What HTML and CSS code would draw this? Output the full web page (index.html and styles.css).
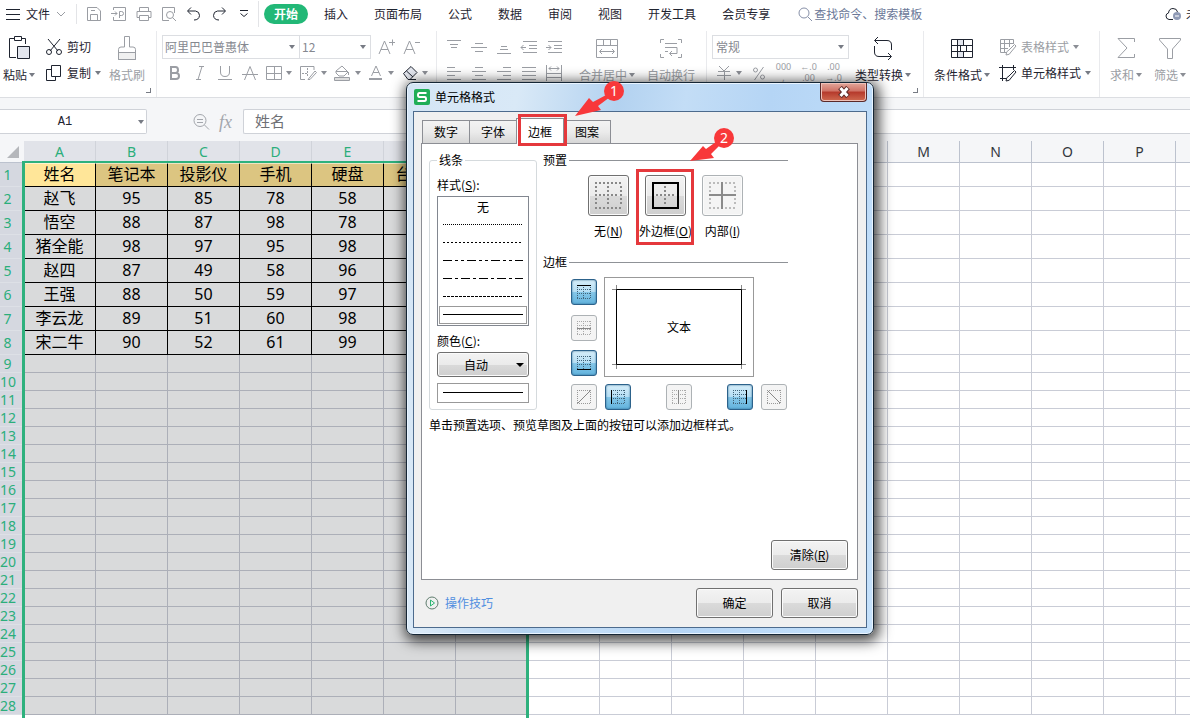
FILE: index.html
```html
<!DOCTYPE html>
<html lang="zh-CN">
<head>
<meta charset="utf-8">
<title>单元格格式</title>
<link rel="stylesheet" href="styles.css">
</head>
<body>
<svg class="defs" aria-hidden="true">
  <symbol id="grid-dots" viewBox="0 0 14 14">
    <path d="M0 .5H14M0 4.5H14M0 8.5H14M0 13.5H14M.5 0V14M6.5 0V14M13.5 0V14" fill="none" stroke="currentColor" stroke-dasharray="1 1"/>
  </symbol>
  <symbol id="big-dots" viewBox="0 0 27 27">
    <path d="M0 1H27M0 26H27M1 4V24M26 4V24" fill="none" stroke="currentColor" stroke-width="2" stroke-dasharray="2 2"/>
  </symbol>
  <symbol id="big-cross" viewBox="0 0 27 27">
    <path d="M4 13H23M13 4V23" fill="none" stroke="currentColor" stroke-width="2" stroke-dasharray="2 2"/>
  </symbol>
</svg>

<nav class="menubar">
  <button class="file-menu"><svg width="14" height="12" viewBox="0 0 14 12"><path d="M0 1.5H14M0 6.500H14M0 11.500H14"/></svg>文件<svg class="dim" width="10" height="6" viewBox="0 0 10 6"><path d="M1 1L5 5L9 1"/></svg></button>
  <div class="quick">
    <button aria-label="保存"><svg class="dim" width="16" height="16" viewBox="0 0 16 16"><path d="M1.500 1.500H11L14.500 5V14.500H1.500ZM4.500 14V8.500H11.500V14M5 4.500H9"/></svg></button>
    <button aria-label="输出为PDF"><svg class="dim" width="16" height="16" viewBox="0 0 16 16"><path d="M2.500 4V1.500H14.500V14.500H2.500V11M0 7.500H6M4 5.500L6 7.500L4 9.500M8.500 12V5.500H10.500Q12.500 5.500 12.500 7.500Q12.500 9.500 10.500 9.500H8"/></svg></button>
    <button aria-label="打印"><svg class="dim" width="16" height="16" viewBox="0 0 16 16"><path d="M3.500 5V1.500H12.500V5M3.500 11.500H1V5.500H15V11.500H12.500M3.500 9.500H12.500V14.500H3.500Z"/></svg></button>
    <button aria-label="打印预览"><svg class="dim" width="16" height="16" viewBox="0 0 16 16"><path d="M8 14.500H1.500V1.500H13.500V7M11.500 11.500L15 15"/><circle cx="9" cy="9" r="3.500"/></svg></button>
    <button aria-label="撤销"><svg width="16" height="16" viewBox="0 0 16 16"><path d="M5 1.500L1.500 5L5 8.500M2 5H9.500Q13.500 5.500 13.500 9.500Q13 14 8 14"/></svg></button>
    <button aria-label="恢复"><svg width="16" height="16" viewBox="0 0 16 16"><path d="M11 1.500L14.500 5L11 8.500M14 5H6.500Q2.500 5.500 2.500 9.500Q3 14 8 14"/></svg></button>
    <button aria-label="自定义快速访问"><svg width="10" height="8" viewBox="0 0 10 8"><path d="M1 .5H9M1.500 3.500L5 6.500L8.500 3.500"/></svg></button>
  </div>
  <div class="tabs-main">
    <button class="active">开始</button><button>插入</button><button>页面布局</button><button>公式</button><button>数据</button><button>审阅</button><button>视图</button><button>开发工具</button><button>会员专享</button>
  </div>
  <label class="search"><svg width="15" height="15" viewBox="0 0 15 15"><circle cx="6" cy="6" r="5"/><path d="M10 10L14 14"/></svg><input type="text" placeholder="查找命令、搜索模板" aria-label="查找命令、搜索模板"></label>
  <button class="account"><svg width="17" height="14" viewBox="0 0 17 14"><path d="M8 12.500H4Q1 12 1 9Q1 6.500 3.500 6Q4 1.500 8 1.500Q12 1.500 12.500 5"/><circle class="badge" cx="12" cy="9" r="4"/><path class="minus" d="M10 9H14"/></svg>未同步</button>
</nav>

<div class="ribbon">
  <section class="group clip">
    <button class="big"><svg width="24" height="26" viewBox="0 0 24 26"><path d="M7 3.500H2.500V22.500H9M15 3.500H18.500V9M7.500 1.500H14.500V5.500H7.500Z"/><path class="tint" d="M10.500 11.500H22.500V23.500H10.500Z"/></svg><span>粘贴<i class="caret"></i></span></button>
    <div class="stack">
      <button class="row"><svg width="18" height="18" viewBox="0 0 18 18"><path d="M3 1L13 13M15 1L5 13"/><circle cx="4" cy="14" r="2.500"/><circle cx="14" cy="14" r="2.500"/></svg>剪切</button>
      <button class="row"><svg width="18" height="18" viewBox="0 0 18 18"><path d="M6.500 1.500H15.500V12.500H6.500ZM6 5.500H1.500V16.500H10.500V13"/></svg>复制<i class="caret"></i></button>
    </div>
    <button class="big off brush"><svg width="20" height="26" viewBox="0 0 20 26"><path class="tint" d="M1.500 17.500H18.500V24.500H1.500Z"/><path d="M7.500 12V1.500H12.500V12H16Q18.500 12 18.500 14.500V24.500H1.500V14.500Q1.500 12 4 12Z"/></svg><span>格式刷</span></button>
    <i class="corner"></i>
  </section>

  <section class="group font">
    <div class="line">
      <span class="combo family"><select aria-label="字体"><option>阿里巴巴普惠体</option></select><i class="caret"></i></span>
      <span class="combo size"><select aria-label="字号"><option>12</option></select><i class="caret"></i></span>
      <button class="ic" aria-label="增大字号"><svg width="18" height="18" viewBox="0 0 18 18"><path d="M1 16L6.500 3L12 16M3 11.500H10M11 4.500H17M14.500 1.500V7.500"/></svg></button>
      <button class="ic" aria-label="减小字号"><svg width="18" height="18" viewBox="0 0 18 18"><path d="M1 16L6.500 3L12 16M3 11.500H10M12 4.500H17"/></svg></button>
    </div>
    <div class="line">
      <button class="ic" aria-label="加粗"><svg width="16" height="16" viewBox="0 0 16 16"><path stroke-width="2" d="M4 2H8.500Q11 2 11 5Q11 8 8.500 8H4ZM4 8H9Q12 8 12 11Q12 14 9 14H4Z"/></svg></button>
      <button class="ic" aria-label="倾斜"><svg width="16" height="16" viewBox="0 0 16 16"><path d="M7 1.500H12M4 14.500H9M10 1.500L6 14.500"/></svg></button>
      <button class="ic" aria-label="下划线"><svg width="16" height="16" viewBox="0 0 16 16"><path d="M3.500 1V7Q3.500 11.500 8 11.500Q12.500 11.500 12.500 7V1M1 14.500H15"/></svg></button>
      <button class="ic" aria-label="删除线"><svg width="16" height="16" viewBox="0 0 16 16"><path d="M2.500 15L8 1.500L13.500 15M0 9.500H16"/></svg></button>
      <button class="ic drop" aria-label="边框"><svg width="16" height="16" viewBox="0 0 16 16"><path d="M.5 1.500H15.500V14.500H.5ZM8.500 1.500V14.500M1 8.500H15"/></svg><i class="caret"></i></button>
      <button class="ic drop" aria-label="绘图边框"><svg width="18" height="16" viewBox="0 0 18 16"><path d="M6 14.500H1.500V1.500H15V5M9 14.500L16 6L17.500 7.500L11 14.500Z"/><path d="M3 8.500H9M8.500 3V11" stroke-dasharray="2 1"/></svg><i class="caret"></i></button>
      <button class="ic drop" aria-label="填充颜色"><svg width="18" height="16" viewBox="0 0 18 16"><path d="M3 6L9 1L15 7L11 11H6L3 8ZM3 6.500H14M15.500 7V10"/><path class="bar" d="M1.500 12.500H16.500V15.500H1.500Z"/></svg><i class="caret"></i></button>
      <button class="ic drop" aria-label="字体颜色"><svg width="16" height="16" viewBox="0 0 16 16"><path d="M3.500 11L8 1L12.500 11M5 7.500H11"/><path d="M1 14H14" stroke-width="2"/></svg><i class="caret"></i></button>
      <button class="ic drop dark" aria-label="清除"><svg width="16" height="16" viewBox="0 0 16 16"><path class="tint" d="M1.500 8.500L9 1.500L15 7.500L8 14.500H6Z"/><path d="M4.500 6L11 12M8 14.500H14"/></svg><i class="caret"></i></button>
    </div>
  </section>

  <section class="group align">
    <div class="stack">
      <div class="line">
        <button class="ic" aria-label="顶端对齐"><svg width="16" height="16" viewBox="0 0 16 16"><path d="M1 1.500H15M4 5.500H12M5 8.500H11"/></svg></button>
        <button class="ic" aria-label="垂直居中"><svg width="16" height="16" viewBox="0 0 16 16"><path d="M4 4.500H12M0 8.500H16M4 12.500H12"/></svg></button>
        <button class="ic" aria-label="底端对齐"><svg width="16" height="16" viewBox="0 0 16 16"><path d="M5 7.500H11M4 10.500H12M1 14.500H15"/></svg></button>
        <button class="ic" aria-label="减少缩进"><svg width="18" height="16" viewBox="0 0 18 16"><path d="M3 2.500H17M9 6.500H17M9 9.500H17M3 13.500H17M1 8.500H6M3.500 6L1 8.500L3.500 11"/></svg></button>
        <button class="ic" aria-label="增加缩进"><svg width="18" height="16" viewBox="0 0 18 16"><path d="M3 2.500H17M9 6.500H17M9 9.500H17M3 13.500H17M1 8.500H6M3.500 6L6 8.500L3.500 11"/></svg></button>
      </div>
      <div class="line">
        <button class="ic" aria-label="左对齐"><svg width="16" height="16" viewBox="0 0 16 16"><path d="M1 2.500H9M1 6.500H15M1 10.500H9M1 14.500H15"/></svg></button>
        <button class="ic" aria-label="居中"><svg width="16" height="16" viewBox="0 0 16 16"><path d="M4 2.500H12M1 6.500H15M4 10.500H12M1 14.500H15"/></svg></button>
        <button class="ic" aria-label="右对齐"><svg width="16" height="16" viewBox="0 0 16 16"><path d="M7 2.500H15M1 6.500H15M7 10.500H15M1 14.500H15"/></svg></button>
        <button class="ic" aria-label="两端对齐"><svg width="16" height="16" viewBox="0 0 16 16"><path d="M1 2.500H15M1 6.500H15M1 10.500H15M1 14.500H15"/></svg></button>
        <button class="ic" aria-label="分散对齐"><svg width="16" height="16" viewBox="0 0 16 16"><path d="M.5 0V16M15.500 0V16M3 3.500H13M5 1.500L3 3.500L5 5.500M11 1.500L13 3.500L11 5.500M1 8.500H15M1 12.500H15"/></svg></button>
      </div>
    </div>
    <button class="big off merge"><svg width="24" height="26" viewBox="0 0 24 26"><path d="M1.500 4.500H22.500V22.500H1.500ZM1.500 10.500H22.500M8.500 4.500V10.500M15.500 4.500V10.500M5 16.500H19M7 14L4.500 16.500L7 19M17 14L19.500 16.500L17 19"/></svg><span>合并居中<i class="caret"></i></span></button>
    <button class="big off"><svg width="24" height="26" viewBox="0 0 24 26"><path d="M1.500 8V4.500H5M19 4.500H22.500V8M22.500 19V22.500H19M5 22.500H1.500V19M6 8.500H18M6 12.500H18V18.500H11M6 16.500H9M13 16L10.500 18.500L13 21"/></svg><span>自动换行</span></button>
  </section>

  <section class="group number">
    <div class="stack">
      <div class="line"><span class="combo format"><select aria-label="数字格式"><option>常规</option></select><i class="caret"></i></span></div>
      <div class="line">
        <button class="ic drop" aria-label="货币"><svg width="16" height="16" viewBox="0 0 16 16"><path d="M3 1L8 6L13 1M8.500 6V15M2 6.500H14M1 10.500H15"/></svg><i class="caret"></i></button>
        <button class="ic" aria-label="百分比"><svg width="14" height="16" viewBox="0 0 14 16"><circle cx="3.500" cy="5" r="2"/><circle cx="10.500" cy="12" r="2"/><path d="M11.500 2L2.500 15"/></svg></button>
        <button class="ic mini" aria-label="千位分隔"><span>000</span><span>,</span></button>
        <button class="ic mini" aria-label="增加小数位"><span>←.0</span><span>.00</span></button>
        <button class="ic mini" aria-label="减少小数位"><span>.00</span><span>→.0</span></button>
      </div>
    </div>
    <button class="big convert"><svg width="24" height="26" viewBox="0 0 24 26"><path d="M7 2L3.500 5.500L7 9M4 5.500H16Q20.500 5.500 20.500 10V15M3.500 11V17Q3.500 21.500 8 21.500H20M17 18L20.500 21.500L17 25"/></svg><span>类型转换<i class="caret"></i></span></button>
    <i class="corner"></i>
  </section>

  <section class="group styles">
    <button class="big"><svg width="24" height="26" viewBox="0 0 24 26"><path class="tint" d="M7.500 4.500H13.500V10.500H7.500ZM7.500 16.500H13.500V22.500H7.500Z"/><path d="M1.500 4.500H22.500V22.500H1.500ZM1.500 10.500H22.500M1.500 16.500H22.500M7.500 4.500V22.500M10.500 10.500V16.500M13.500 4.500V10.500M16.500 16.500V10.500M13.500 16.500V22.500"/></svg><span>条件格式<i class="caret"></i></span></button>
    <div class="stack">
      <button class="row off"><svg width="18" height="18" viewBox="0 0 18 18"><path d="M7 14.500H1.500V1.500H14.500V6M1.500 5.500H14.500M1.500 10.500H9M5.500 1.500V14.500M10.500 1.500V9M7 17Q7 13 10 12L15.500 6.500L17 8L12 14Q11 17 7 17Z"/></svg>表格样式<i class="caret"></i></button>
      <button class="row"><svg width="18" height="18" viewBox="0 0 18 18"><path d="M0 3.500H17M3.500 1V17M14.500 1V6M1 14.500H7M7 17Q7 13 10 12L15.500 6.500L17 8L12 14Q11 17 7 17Z"/></svg>单元格样式<i class="caret"></i></button>
    </div>
  </section>

  <section class="group edit">
    <button class="big off"><svg width="24" height="26" viewBox="0 0 24 26"><path d="M20.500 7V3.500H4L13 13L4 22.500H20.500V19"/></svg><span>求和<i class="caret"></i></span></button>
    <button class="big off"><svg width="24" height="26" viewBox="0 0 24 26"><path d="M1.500 3.500H22.500V5L14.500 14V23.500H9.500V14L1.500 5Z"/></svg><span>筛选<i class="caret"></i></span></button>
  </section>
</div>

<div class="formula">
  <span class="namebox"><input type="text" value="A1" aria-label="名称框"><i class="caret"></i></span>
  <button aria-label="查找"><svg width="18" height="18" viewBox="0 0 18 18"><circle cx="8" cy="7.500" r="6"/><path d="M12.500 12L17 16.500M5 6.500H11M5 9.500H11"/></svg></button>
  <button class="fx" aria-label="插入函数">fx</button>
  <input class="content" type="text" value="姓名" aria-label="编辑栏">
</div>

<main class="sheet">
  <table class="cells" id="cells"><thead></thead><tbody></tbody></table>
  <div class="selection"></div>
</main>

<section class="dialog" role="dialog" aria-labelledby="dlg-title">
  <header class="titlebar">
    <svg width="16" height="16" viewBox="0 0 16 16"><rect width="16" height="16" rx="2" fill="#1fae57"/><path d="M12.500 4H5.500Q4 4 4 6Q4 8 5.500 8H10.500Q12 8 12 10Q12 12 10.500 12H3.500" fill="none" stroke="#fff" stroke-width="2"/></svg>
    <h1 id="dlg-title">单元格格式</h1>
    <button class="close" aria-label="关闭"><svg width="14" height="12" viewBox="0 0 14 12"><path d="M3 1.500L11 10.500M11 1.500L3 10.500" stroke="#5b2a28" stroke-width="5"/><path d="M3.500 2L10.500 10M10.500 2L3.500 10" stroke="#fff" stroke-width="3"/></svg></button>
  </header>
  <div class="client">
    <div class="tabs" role="tablist">
      <button role="tab">数字</button><button role="tab">字体</button><button role="tab" aria-selected="true">边框</button><button role="tab">图案</button>
    </div>
    <div class="page">
      <div class="columns">
        <fieldset class="lines">
          <legend>线条</legend>
          <p class="caption" id="l-style">样式(<u>S</u>):</p>
          <div class="list" role="listbox" aria-labelledby="l-style">
            <button role="option">无</button>
            <button role="option" aria-label="细点线"><svg width="80" height="2"><path d="M0 .5H80" stroke-dasharray="1 1"/></svg></button>
            <button role="option" aria-label="点线"><svg width="80" height="2"><path d="M0 .5H80" stroke-dasharray="2 2"/></svg></button>
            <button role="option" aria-label="双点划线"><svg width="80" height="2"><path d="M0 .5H80" stroke-dasharray="9 3 3 3 3 3"/></svg></button>
            <button role="option" aria-label="点划线"><svg width="80" height="2"><path d="M0 .5H80" stroke-dasharray="9 3 3 3"/></svg></button>
            <button role="option" aria-label="短划线"><svg width="80" height="2"><path d="M0 .5H80" stroke-dasharray="3 1"/></svg></button>
            <button role="option" aria-label="实线" aria-selected="true"><svg width="80" height="2"><path d="M0 .5H80"/></svg></button>
          </div>
          <p class="caption second" id="l-color">颜色(<u>C</u>):</p>
          <button class="push color" aria-labelledby="l-color"><span>自动</span><i></i></button>
          <div class="sample"><svg width="80" height="2"><path d="M0 .5H80"/></svg></div>
        </fieldset>
        <div class="right">
          <h2>预置</h2>
          <div class="presets">
            <div><button class="push" aria-labelledby="p-none"><svg width="27" height="27" viewBox="0 0 27 27"><use href="#big-dots"/><use href="#big-cross"/></svg></button><span id="p-none">无(<u>N</u>)</span></div>
            <div><button class="push" aria-labelledby="p-out"><svg width="27" height="27" viewBox="0 0 27 27"><use href="#big-cross"/><path d="M1 1H26V26H1Z" fill="none" stroke="#000" stroke-width="2"/></svg></button><span id="p-out">外边框(<u>O</u>)</span></div>
            <div><button class="push disabled" aria-labelledby="p-in"><svg width="27" height="27" viewBox="0 0 27 27"><use href="#big-dots"/><path d="M0 13H27M13 0V27" stroke="#8a8a8a" stroke-width="2"/></svg></button><span id="p-in">内部(<u>I</u>)</span></div>
          </div>
          <h2 class="second">边框</h2>
          <div class="editor">
            <div class="side">
              <button class="edge on" aria-label="上边框"><svg width="14" height="14" viewBox="0 0 14 14"><use href="#grid-dots"/><path d="M0 .5H14"/></svg></button>
              <button class="edge" aria-label="内部横线"><svg width="14" height="14" viewBox="0 0 14 14"><use href="#grid-dots"/><path d="M0 7.500H14"/></svg></button>
              <button class="edge on" aria-label="下边框"><svg width="14" height="14" viewBox="0 0 14 14"><use href="#grid-dots"/><path d="M0 13.500H14"/></svg></button>
            </div>
            <div class="preview"><svg width="148" height="98" viewBox="0 0 148 98"><path d="M7 11.500H16M11.500 7V16M132 11.500H141M136.500 7V16M7 86.500H16M11.500 82V91M132 86.500H141M136.500 82V91" stroke="#888"/><path d="M11.500 11.500H136.500V86.500H11.500Z" fill="none" stroke="#000"/></svg><span>文本</span></div>
            <div class="bottom">
              <button class="edge" aria-label="左斜线"><svg width="14" height="14" viewBox="0 0 14 14"><path class="dots" d="M0 .5H14M0 13.500H14M.5 0V14M13.500 0V14"/><path d="M1 13L13 1"/></svg></button>
              <div class="mid">
                <button class="edge on" aria-label="左边框"><svg width="14" height="14" viewBox="0 0 14 14"><use href="#grid-dots"/><path d="M.5 0V14"/></svg></button>
                <button class="edge" aria-label="内部竖线"><svg width="14" height="14" viewBox="0 0 14 14"><use href="#grid-dots"/><path d="M6.500 0V14"/></svg></button>
                <button class="edge on" aria-label="右边框"><svg width="14" height="14" viewBox="0 0 14 14"><use href="#grid-dots"/><path d="M13.500 0V14"/></svg></button>
              </div>
              <button class="edge" aria-label="右斜线"><svg width="14" height="14" viewBox="0 0 14 14"><path class="dots" d="M0 .5H14M0 13.500H14M.5 0V14M13.500 0V14"/><path d="M1 1L13 13"/></svg></button>
            </div>
          </div>
        </div>
      </div>
      <p class="help">单击预置选项、预览草图及上面的按钮可以添加边框样式。</p>
      <button class="push command clear">清除(<u>R</u>)</button>
    </div>
    <footer>
      <a href="#tips"><svg width="14" height="14" viewBox="0 0 14 14"><circle cx="7" cy="7" r="6" stroke="#5f7d6e"/><path d="M5.500 4L9.500 7L5.500 10Z" stroke="#2bb673"/></svg>操作技巧</a>
      <button class="push command">确定</button>
      <button class="push command">取消</button>
    </footer>
  </div>
  <svg class="notes" viewBox="0 0 468 552" aria-hidden="true">
    <path class="frame" d="M113.500 33.500H159.500V62.500H113.500Z"/>
    <path class="frame" d="M231.500 88.500H286.500V161.500H231.500Z"/>
    <path class="arrow" d="M169 34L183 16L187 20L202 12L204 15L192 24L195 28Z"/>
    <path class="arrow" d="M284 79L297 64L300 67L314 57L317 60L305 72L308 76Z"/>
    <circle cx="208" cy="9" r="10"/><circle cx="318" cy="56" r="10"/>
    <text x="208" y="14">1</text><text x="318" y="61">2</text>
  </svg>
</section>
<script src="script.js"></script>
</body>
</html>
```
FILE: styles.css
```css
* { box-sizing: border-box; }
body {
  margin: 0; height: 100vh; overflow: hidden; position: relative;
  display: flex; flex-direction: column; background: #fff; color: #1f2430;
  font: 12px/16px "Noto Sans CJK SC", sans-serif;
}
button, input, select { font: inherit; color: inherit; margin: 0; padding: 0; border: 0; background: none; border-radius: 0; }
button { white-space: nowrap; }
p, h1, h2 { margin: 0; font-size: 12px; font-weight: 400; }
.defs { position: absolute; width: 0; height: 0; }
.menubar svg, .ribbon svg, .formula svg { fill: none; stroke: currentColor; flex: none; display: block; }
.caret { display: inline-block; flex: none; border: 3px solid transparent; border-top: 4px solid #777b84; border-bottom: 0; }

.menubar { flex: none; display: flex; align-items: center; height: 28px; white-space: nowrap; overflow: hidden; }
.menubar .dim { color: #9a9da3; }
.file-menu { display: flex; align-items: center; gap: 6px; width: 77px; height: 20px; padding-left: 6px; border-right: 1px solid #e3e4e7; }
.quick { display: flex; height: 26px; padding: 0 2px 0 4px; border-right: 1px solid #e3e4e7; }
.quick button { width: 25px; display: grid; place-items: center; }
.tabs-main { display: flex; align-items: center; gap: 6px; padding-left: 5px; }
.tabs-main button { height: 20px; padding: 0 10px; }
.tabs-main .active { background: #22b877; color: #fff; border-radius: 10px; font-weight: 700; }
.search { flex: 1; display: flex; align-items: center; gap: 1px; padding-left: 18px; color: #8790a8; }
.search input { flex: 1; min-width: 0; outline: 0; }
.search input::placeholder { color: #6b7898; opacity: 1; }
.account { display: flex; align-items: center; gap: 4px; width: 25px; overflow: hidden; }
.account .badge { fill: #8f9ab5; stroke: none; }
.account .minus { stroke: #fff; }

.ribbon { flex: none; display: flex; height: 70px; overflow: hidden; border-bottom: 1px solid #dcdee2; }
.group { position: relative; flex: none; display: flex; border-right: 1px solid #e9eaed; margin-top: 3px; padding-top: 4px; }
.off, .font, .align .stack, .number .stack { color: #9b9ea4; }
.off .caret, .dark .caret, .ic .caret { border-top-color: #8b8e95; }
.dark { color: #1f2430; }
.tint { fill: #e3e6ee; }
.off .tint { fill: #f0f0f0; }
.bar { fill: #ddd; }
.big { display: flex; flex-direction: column; align-items: center; justify-content: space-between; height: 48px; }
.big span, .row { display: flex; align-items: center; }
.big .caret { margin-left: 2px; }
.stack { display: flex; flex-direction: column; gap: 2px; }
.line, .row { display: flex; align-items: center; height: 24px; }
.row { gap: 4px; }
.ic { flex: none; width: 25px; height: 24px; display: flex; align-items: center; justify-content: center; }
.drop { width: 34px; gap: 4px; }
.combo { position: relative; display: flex; height: 24px; border: 1px solid #dcdee2; }
.combo select { appearance: none; width: 100%; padding-left: 2px; outline: 0; color: #85888f; }
.combo .caret { position: absolute; right: 4px; top: 9px; }
.corner { position: absolute; right: 5px; bottom: 4px; width: 5px; height: 5px; border: solid #777b84; border-width: 0 1px 1px 0; }
.clip { width: 157px; gap: 10px; padding-left: 3px; }
.clip .stack { width: 54px; }
.font { width: 280px; flex-direction: column; gap: 2px; padding-left: 5px; }
.family { width: 138px; }
.size { width: 71px; border-left: 0; margin-right: 3px; }
.align { width: 270px; padding-left: 4px; }
.merge { margin: 0 12px 0 13px; }
.number { width: 217px; padding-left: 5px; }
.format { width: 137px; }
.format select { padding-left: 3px; }
.mini { flex-direction: column; justify-content: flex-start; font: 9px/12px "Noto Sans", sans-serif; }
.mini span { height: 11px; line-height: 11px; }
.convert { margin-left: 6px; }
.styles { width: 176px; padding-left: 10px; gap: 9px; }
.edit { padding-left: 10px; gap: 12px; border-right: 0; }

.formula { flex: none; display: flex; align-items: center; height: 43px; padding-top: 4px; background: #f5f6f8; }
.formula button { color: #a3a6ac; width: 25px; display: grid; place-items: center; }
.namebox { position: relative; width: 147px; margin-right: 41px; height: 25px; background: #fff; border: 1px solid #cfd2d8; border-left: 0; border-radius: 0 2px 2px 0; }
.namebox input { width: 100%; height: 23px; padding-right: 16px; text-align: center; font: 12px/22px "Liberation Mono", monospace; }
.namebox .caret { position: absolute; right: 2px; top: 10px; }
.formula .fx { font: italic 18px/22px "Liberation Serif", serif; }
.formula .content { flex: 1; min-width: 0; height: 25px; margin-left: 5px; padding: 0 11px 3px; background: #fff; border: 1px solid #cfd2d8; border-right: 0; border-radius: 2px 0 0 2px; font-size: 15px; color: #6e7075; }

.sheet { position: relative; flex: 1; min-height: 0; overflow: hidden; }
.cells { table-layout: fixed; width: 0; border-collapse: separate; border-spacing: 0; font: 16px/23px "Noto Sans", "Noto Sans CJK SC", sans-serif; text-align: center; color: #000; }
.cells th, .cells td { width: 72px; height: 18px; padding: 0; border: solid #c9ccd6; border-width: 0 1px 1px 0; overflow: hidden; white-space: nowrap; font-weight: 400; }
.cells thead th { height: 22px; background: #f5f6f8; border-color: #bcc2ce; font-size: 14px; line-height: 21px; color: #33363d; }
.cells thead .picked { background: #e1e3e9; color: #2bae7b; border-color: #d0d3da; }
.cells tr > :first-child { width: 24px; }
.cells thead .all { background: #f5f6f8; border-right: 0; }
.all::after { content: ""; display: block; width: 0; margin-left: 7px; border: solid transparent; border-width: 6px; border-right-color: #b5b7bb; border-bottom-color: #b5b7bb; }
.cells tbody th { background: #d5d8e0; color: #2bae7b; font-size: 14px; line-height: 17px; border-width: 0 0 1px; border-color: #dde0e6; padding-right: 9px; }
.cells tbody .filled > * { height: 24px; }
.cells .inside { background: #d9dadb; border-color: #acafb8; }
.cells .filled .inside { border-color: #000; }
.cells .head .inside { background: #dcc581; }
.cells .head .origin { background: #ffe699; }
.selection { position: absolute; left: 22px; top: 20px; width: 507px; bottom: -4px; border: 3px solid #2eb17d; border-top-width: 2px; box-shadow: inset 0 1px #fff8; }

.dialog {
  position: absolute; left: 406px; top: 82px; width: 468px; padding: 0 6px 6px;
  border: 1px solid #152635; border-radius: 7px; color: #000;
  background: linear-gradient(100deg, #d4e5f5 0, #d9e9f7 20%, #b3d2f0 38%, #c3ddf6 50%, #b5d5f5 65%, #c5e1fb 100%);
  box-shadow: inset 0 0 0 1px #e9f4ff, 2px 3px 14px 3px rgba(0, 0, 0, .75);
}
.titlebar { display: flex; align-items: center; height: 28px; gap: 5px; padding-left: 1px; }
.titlebar h1 { flex: 1; }
.close { align-self: flex-start; width: 47px; height: 19px; display: grid; place-items: center; border: 1px solid #5a2a2a; border-top: 0; border-radius: 0 0 4px 4px; background: linear-gradient(#e3a79b 0, #cf7265 45%, #b5392b 50%, #cf6a50 100%); box-shadow: inset 0 0 0 1px #eec1b8; }
.client { border: 1px solid #4d6b8d; background: #f0f0f0; padding: 8px 8px 9px 7px; }
.tabs { display: flex; align-items: flex-end; height: 23px; padding-left: 1px; }
.tabs button { width: 48px; height: 23px; border: 1px solid #8c8e94; border-bottom: 0; margin-right: -1px; background: linear-gradient(#f3f3f3 0, #ebebeb 50%, #d6d6d6 100%); }
.tabs button[aria-selected] { position: relative; height: 26px; margin-bottom: -1px; background: #fff; }
.page { display: flex; flex-direction: column; min-height: 437px; padding: 8px 9px 9px 7px; background: #fff; border: 1px solid #8c8e94; }
.columns { display: grid; grid-template-columns: 108px 245px; gap: 6px; align-items: start; }
.lines { min-width: 0; margin: 0; padding: 9px 7px 6px; border: 1px solid #d5dadd; border-radius: 3px; }
.lines legend { padding: 0 2px; }
.caption { margin-bottom: 3px; }
.caption.second { margin-top: 7px; }
.page svg { display: block; stroke: #000; }
.list { display: flex; flex-direction: column; padding: 1px; border: 1px solid #828790; }
.list button { display: grid; place-items: center; height: 18px; }
.list button[aria-selected] { border: 1px solid #999; }
.push { border: 1px solid #707070; border-radius: 3px; background: linear-gradient(#f3f3f3 0, #ebebeb 50%, #dadada 51%, #cfcfcf 100%); box-shadow: inset 0 0 0 1px #fbfbfb; }
.color { display: flex; align-items: center; width: 100%; height: 25px; padding: 0 4px 0 0; }
.color span { flex: 1; text-align: center; padding-right: 2px; }
.color i { border: 4px solid transparent; border-top-color: #000; border-bottom: 0; }
.sample { display: grid; place-items: center; height: 20px; margin-top: 6px; border: 1px solid #999; }
h2 { display: flex; align-items: center; }
h2::after { content: ""; flex: 1; height: 1px; margin-left: 2px; background: #8f9297; }
h2.second { margin-top: 15px; }
.presets { display: flex; margin: 7px 0 0 37px; }
.presets div { width: 57px; display: flex; flex-direction: column; align-items: center; gap: 7px; white-space: nowrap; }
.presets .push { width: 41px; height: 41px; display: grid; place-items: center; color: #888; }
.presets svg { stroke: none; }
.presets .disabled { background: #f4f4f4; border-color: #adb2b5; color: #bbb; }
.editor { display: grid; grid-template-columns: 26px 150px; column-gap: 7px; row-gap: 7px; margin: 7px 0 0 28px; }
.side { display: flex; flex-direction: column; justify-content: space-between; padding: 2px 0 1px; }
.edge { width: 26px; height: 26px; display: grid; place-items: center; border: 1px solid #adb2b5; border-radius: 3px; background: #f4f4f4; color: #aaa; }
.edge svg { stroke: #888; fill: none; }
.edge .dots { stroke: #999; stroke-dasharray: 1 1; }
.edge.on { border: 1px solid #2c628b; background: linear-gradient(#d5edf9 0, #b5def4 50%, #86c7e8 51%, #62b3dd 100%); color: #41647a; box-shadow: inset 0 0 2px #2c628b; }
.edge.on svg { stroke: #000; }
.preview { display: grid; place-items: center; height: 100px; border: 1px solid #999; }
.preview > * { grid-area: 1 / 1; }
.bottom { grid-column: 1 / -1; display: flex; gap: 8px; width: 216px; }
.mid { flex: 1; display: flex; justify-content: space-between; }
.help { margin-top: 7px; }
.command { width: 77px; height: 30px; }
.clear { margin: auto 0 0 auto; }
footer { display: flex; align-items: center; gap: 8px; margin-top: 8px; }
footer a { display: flex; align-items: center; gap: 6px; margin: 0 auto 0 4px; color: #4f8ee0; text-decoration: none; }
footer svg { fill: none; }
.notes { position: absolute; left: -1px; top: -1px; width: 468px; height: 552px; overflow: visible; pointer-events: none; fill: #f8383a; }
.notes .frame { fill: none; stroke: #e5383c; stroke-width: 3; }
.notes text { fill: #fff; font: 14px "Noto Sans", sans-serif; text-anchor: middle; }
```
FILE: script.js
```js
const columns = "ABCDEFGHIJKLMNOPQ".split("");
const data = [
  ["姓名", "笔记本", "投影仪", "手机", "硬盘", "台式机", ""],
  ["赵飞", 95, 85, 78, 58],
  ["悟空", 88, 87, 98, 78],
  ["猪全能", 98, 97, 95, 98],
  ["赵四", 87, 49, 58, 96],
  ["王强", 88, 50, 59, 97],
  ["李云龙", 89, 51, 60, 98],
  ["宋二牛", 90, 52, 61, 99]
];
const selectedColumns = 7;
const rowCount = 28;
const table = document.getElementById("cells");

function add(row, tag, text, className) {
  const cell = document.createElement(tag);
  cell.textContent = text;
  if (className) cell.className = className;
  row.appendChild(cell);
}

const header = table.tHead.insertRow();
add(header, "th", "", "all");
columns.forEach((name, i) => add(header, "th", name, i < selectedColumns ? "picked" : ""));

for (let r = 0; r < rowCount; r++) {
  const row = table.tBodies[0].insertRow();
  const values = data[r] || [];
  if (data[r]) row.className = r === 0 ? "filled head" : "filled";
  add(row, "th", r + 1);
  columns.forEach((_, c) => {
    const className = c < selectedColumns ? (r + c === 0 ? "inside origin" : "inside") : "";
    add(row, "td", values[c] === undefined ? "" : values[c], className);
  });
}
```
